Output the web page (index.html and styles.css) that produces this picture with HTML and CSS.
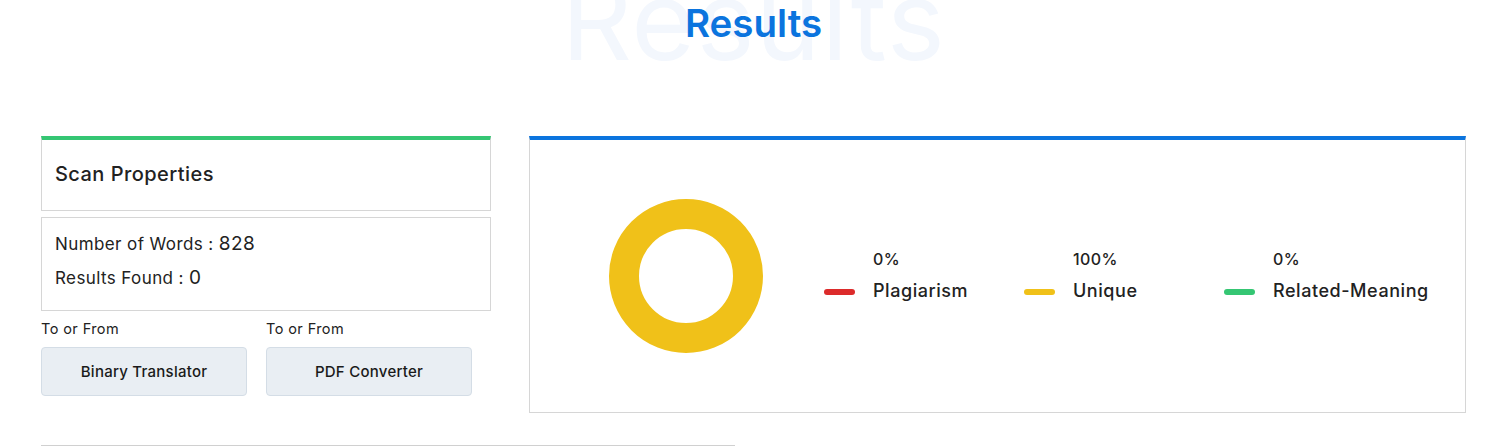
FILE: index.html
```html
<!DOCTYPE html>
<html lang="en">
<head>
<meta charset="utf-8">
<title>Results</title>
<link rel="stylesheet" href="styles.css">
</head>
<body>
<main class="page">
  <section class="results">
    <header class="title-wrap">
      <span class="ghost" aria-hidden="true">Results</span>
      <h2 class="title">Results</h2>
    </header>
    <div class="grid">
      <div class="left">
        <div class="box box-head">Scan Properties</div>
        <div class="box box-body">
          <p class="stat">Number of Words : <span class="num">828</span></p>
          <p class="stat">Results Found : <span class="num">0</span></p>
        </div>
        <div class="tools">
          <div class="tool">
            <span class="tool-label">To or From</span>
            <a class="tool-btn" href="#">Binary Translator</a>
          </div>
          <div class="tool">
            <span class="tool-label">To or From</span>
            <a class="tool-btn" href="#">PDF Converter</a>
          </div>
        </div>
      </div>
      <div class="chart-card">
        <div class="donut"></div>
        <div class="legend">
          <div class="legend-item">
            <span class="pct">0%</span>
            <span class="dash dash-red"></span>
            <span class="label">Plagiarism</span>
          </div>
          <div class="legend-item">
            <span class="pct">100%</span>
            <span class="dash dash-yellow"></span>
            <span class="label">Unique</span>
          </div>
          <div class="legend-item">
            <span class="pct">0%</span>
            <span class="dash dash-green"></span>
            <span class="label">Related-Meaning</span>
          </div>
        </div>
      </div>
    </div>
    <div class="divider"></div>
  </section>
</main>
</body>
</html>
```

FILE: styles.css
```css
* { box-sizing: border-box; }
html, body { margin: 0; padding: 0; background: #fff; }
body {
  font-family: Inter, "Open Sans", "Liberation Sans", sans-serif;
  color: #1f1f1f;
}
.page { padding: 0 25px 0 41px; overflow: hidden; height: 446px; }

.title-wrap {
  position: relative;
  height: 136px;
  text-align: center;
}
.ghost {
  position: absolute;
  left: 50%;
  top: -40px;
  transform: translateX(-50%);
  font-size: 110px;
  line-height: 120px;
  font-weight: 400;
  color: #f3f7fd;
  white-space: nowrap;
  letter-spacing: 1px;
}
.title {
  position: relative;
  margin: 0;
  font-size: 38.5px;
  line-height: 46px;
  font-weight: 600;
  color: #0b74de;
}

.grid {
  display: grid;
  grid-template-columns: 450px 1fr;
  column-gap: 38px;
  align-items: start;
}

.box {
  border: 1px solid #d6d6d6;
}
.box-head {
  border-top: 4px solid #35c673;
  height: 75px;
  display: flex;
  align-items: center;
  padding: 0 13px 3px;
  font-size: 20px;
  letter-spacing: 0.45px;
  font-weight: 500;
  color: #222;
}
.box-body {
  margin-top: 6px;
  padding: 9px 13px 15px;
}
.stat {
  margin: 0;
  font-size: 17px;
  letter-spacing: 0.4px;
  line-height: 34px;
  font-weight: 400;
  color: #222;
}
.num { font-size: 19px; }

.tools {
  display: flex;
  gap: 19px;
  margin-top: 8px;
}
.tool { display: flex; flex-direction: column; width: 206px; }
.tool-label {
  font-size: 14.5px;
  letter-spacing: 0.4px;
  line-height: 20px;
  color: #222;
}
.tool-btn {
  margin-top: 8px;
  height: 49px;
  display: flex;
  align-items: center;
  justify-content: center;
  background: #e9eef3;
  border: 1px solid #d4dde6;
  border-radius: 4px;
  font-size: 15px;
  letter-spacing: 0.25px;
  font-weight: 500;
  color: #1a1a1a;
  text-decoration: none;
}

.chart-card {
  height: 277px;
  border: 1px solid #d6d6d6;
  border-top: 4px solid #0b74de;
  display: flex;
  align-items: center;
  padding-left: 79px;
}
.donut {
  width: 154px;
  height: 154px;
  border-radius: 50%;
  border: 30px solid #f0c119;
  flex: none;
}
.legend {
  display: flex;
  margin-left: 61px;
  margin-top: -3px;
}
.legend-item {
  width: 200px;
  display: grid;
  grid-template-columns: 31px auto;
  column-gap: 18px;
  row-gap: 8px;
  align-items: center;
}
.pct {
  grid-column: 2;
  font-size: 16px;
  letter-spacing: 0.4px;
  line-height: 24px;
  font-weight: 500;
  color: #222;
}
.dash {
  grid-column: 1;
  height: 6px;
  border-radius: 3px;
  margin-top: 2px;
}
.dash-red { background: #dc2b2b; }
.dash-yellow { background: #f0c119; }
.dash-green { background: #35c673; }
.label {
  grid-column: 2;
  font-size: 18px;
  letter-spacing: 0.55px;
  line-height: 24px;
  font-weight: 500;
  color: #222;
  white-space: nowrap;
}

.divider {
  margin-top: 32px;
  width: 694px;
  height: 1px;
  background: #d0d0d0;
}
```
